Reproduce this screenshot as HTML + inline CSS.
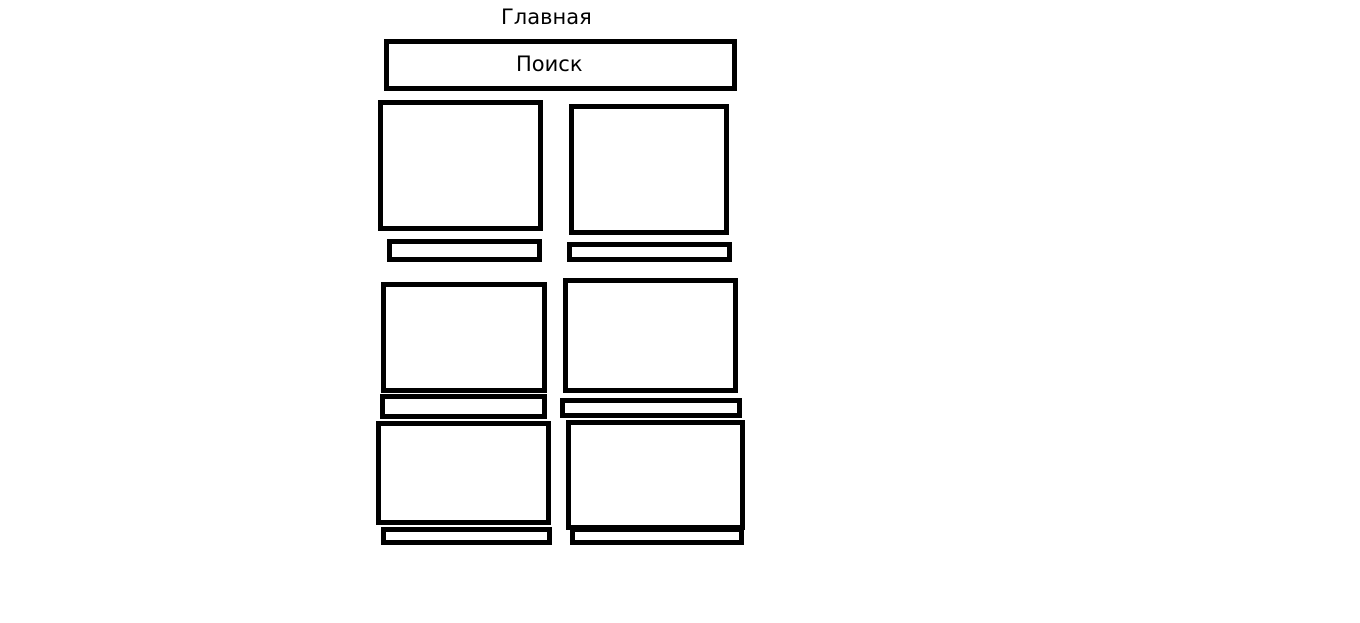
<!DOCTYPE html>
<html><head><meta charset="utf-8"><style>
body{margin:0;width:1360px;height:623px;background:#fff;position:relative;overflow:hidden;font-family:"Segoe UI","DejaVu Sans","Liberation Sans",sans-serif;}
.b{position:absolute;border:5px solid #000;box-sizing:border-box;}
.t{position:absolute;font-size:21px;color:#000;white-space:nowrap;line-height:1;}
</style></head><body>
<div class="t" style="left:501px;top:7px;">Главная</div>
<div class="b" style="left:384px;top:39px;width:353px;height:52px;"></div>
<div class="t" style="left:516px;top:54px;">Поиск</div>
<div class="b" style="left:378px;top:100px;width:165px;height:131px;"></div>
<div class="b" style="left:569px;top:104px;width:160px;height:131px;"></div>
<div class="b" style="left:387px;top:239px;width:155px;height:23px;"></div>
<div class="b" style="left:567px;top:242px;width:165px;height:20px;"></div>
<div class="b" style="left:381px;top:282px;width:166px;height:111px;"></div>
<div class="b" style="left:563px;top:278px;width:175px;height:115px;"></div>
<div class="b" style="left:380px;top:394px;width:167px;height:25px;"></div>
<div class="b" style="left:560px;top:398px;width:182px;height:20px;"></div>
<div class="b" style="left:376px;top:421px;width:175px;height:104px;"></div>
<div class="b" style="left:566px;top:420px;width:179px;height:110px;"></div>
<div class="b" style="left:381px;top:527px;width:171px;height:18px;"></div>
<div class="b" style="left:570px;top:527px;width:174px;height:18px;"></div>
</body></html>
